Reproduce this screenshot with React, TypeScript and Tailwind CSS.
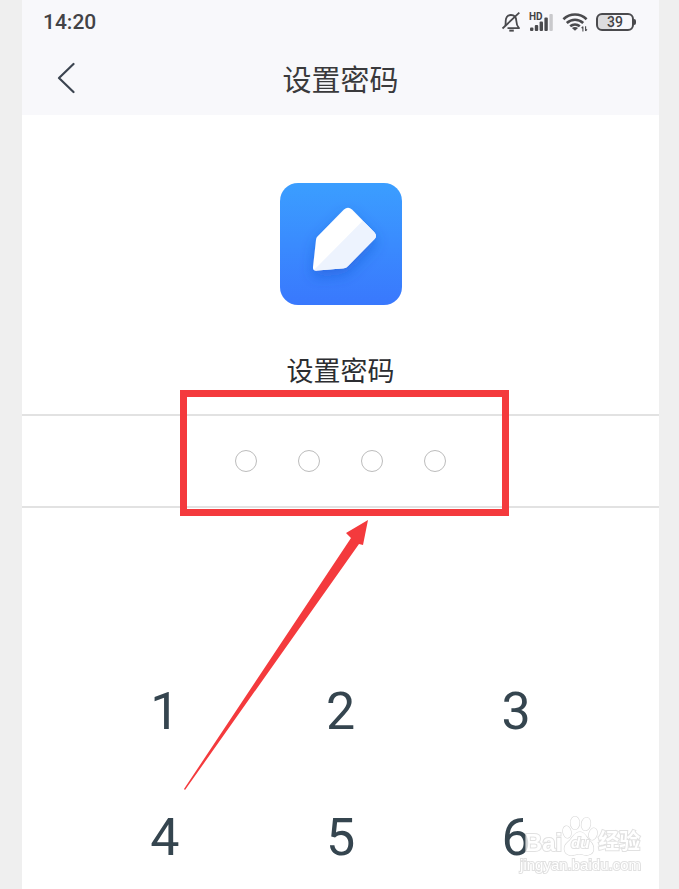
import { useState } from "react";

const KEYS = ["1", "2", "3", "4", "5", "6"];
const CODE_LENGTH = 4;

const BellOffIcon = () => (
  <svg width="20" height="22" viewBox="0 0 20 22" fill="none" stroke="#4a4a4d" strokeWidth="1.8">
    <path d="M4.2 14.8C4.8 13.6 4.6 12 4.7 9.8C4.9 5.9 6.8 4 10 4C13.2 4 15.1 5.9 15.3 9.8C15.4 12.8 15.8 14.8 18 17.2H6.5" strokeLinejoin="round" />
    <path d="M1.5 17.5L18.3 1.6" />
    <path d="M8.3 19.6H12.8" strokeWidth="2" />
  </svg>
);

const SignalIcon = () => (
  <div className="relative">
    <svg width="25" height="20" viewBox="0 0 25 20" fill="#4a4a4d">
      <rect x="1" y="15.5" width="3.4" height="3.5" rx="1" />
      <rect x="5.8" y="13" width="3.4" height="6" rx="1" />
      <rect x="10.6" y="9.5" width="3.4" height="9.5" rx="1" />
      <rect x="15.4" y="5.5" width="3.4" height="13.5" rx="1" />
      <rect x="20.4" y="2" width="3.4" height="17" rx="1" fill="#c9c9cc" />
    </svg>
    <span className="absolute left-0 top-0 text-[10px] leading-[9px] font-bold">HD</span>
  </div>
);

const WifiIcon = () => (
  <svg width="26" height="20" viewBox="0 0 26 20" fill="none" stroke="#4a4a4d" strokeWidth="2.6">
    <path d="M1.4 7.2C8 .9 18 .9 24.6 7.2" />
    <path d="M4.8 11C9.6 6.6 16.4 6.6 21.2 11" />
    <path d="M8.2 14.3C11 12 15 12 17.8 14.3" />
    <path d="M9.9 16.1C11.8 14.7 14.2 14.7 16.1 16.1L13 18.8Z" fill="#4a4a4d" stroke="none" />
    <path d="M20.9 14.6V19.4M23.6 14.2V19M20.9 14.6L19.6 16.2M23.6 19L25 17.4" strokeWidth="1.1" />
  </svg>
);

const AppLogo = () => (
  <svg width="122" height="122" viewBox="0 0 122 122" className="block">
    <defs>
      <linearGradient id="tile" x1="0" y1="0" x2="0" y2="1">
        <stop offset="0" stopColor="#3b9eff" />
        <stop offset="1" stopColor="#3978fd" />
      </linearGradient>
      <filter id="shade" x="-40%" y="-40%" width="180%" height="180%">
        <feDropShadow dx="0" dy="6" stdDeviation="7" floodColor="#1c50c8" floodOpacity="0.45" />
      </filter>
      <clipPath id="pen">
        <path d="M37 54L64 26.5Q68 22.8 72 26.5L94.5 49.5Q97.5 53 94.5 56L68 83Q66.5 84.8 64 85.2L37 87.6Q32.5 88 33 84L36 57Q36.2 55 37 54Z" />
      </clipPath>
    </defs>
    <rect width="122" height="122" rx="18" fill="url(#tile)" />
    <g filter="url(#shade)">
      <g clipPath="url(#pen)">
        <rect width="122" height="122" fill="#fff" />
        <path d="M34 87L82.5 38L110 60L70 100Z" fill="#edf3fe" />
      </g>
    </g>
  </svg>
);

const Annotation = () => (
  <svg width="329" height="402" viewBox="0 0 329 402" fill="#f43a3d">
    <rect x="3.5" y="3.5" width="322" height="119" fill="none" stroke="#f43a3d" strokeWidth="7" />
    <path d="M188 130L166 143L171 148L4 399L5 400L179 154L183 155Z" />
  </svg>
);

const Watermark = () => (
  <div
    aria-hidden="true"
    className="pointer-events-none absolute right-[18px] bottom-4 flex flex-col items-center font-['Liberation_Sans','Noto_Sans_CJK_SC',sans-serif] font-bold text-white opacity-80 [paint-order:stroke] [-webkit-text-stroke:2px_#dadada]"
  >
    <div className="flex items-end pl-1">
      <span className="text-[24px] leading-7">Bai</span>
      <div className="relative">
        <svg width="36" height="42" viewBox="0 0 36 42" fill="#fff" stroke="#d0d0d0" strokeWidth="1.2">
          <ellipse cx="5" cy="17" rx="4" ry="6" transform="rotate(-12 5 17)" />
          <ellipse cx="13" cy="8" rx="4.5" ry="6.5" />
          <ellipse cx="24" cy="9" rx="4.5" ry="6.5" transform="rotate(10 24 9)" />
          <ellipse cx="31" cy="19" rx="4" ry="6" transform="rotate(16 31 19)" />
          <path d="M18 17C23 17 24 22 28 26C33 31 33 39 26 40C22 40.5 20 39 17 39C14 39 11 41 7 40C1 38 1 31 6 27C11 23 12 17 18 17Z" />
        </svg>
        <span className="absolute inset-x-0 bottom-1 text-center text-[15px] leading-5 italic">du</span>
      </div>
      <span className="text-[21px] leading-8">经验</span>
    </div>
    <span className="text-[15px] leading-4 font-normal">jingyan.baidu.com</span>
  </div>
);

export default function App() {
  const [code, setCode] = useState("");

  const press = (key: string) => {
    setCode((prev) => (prev.length < CODE_LENGTH ? prev + key : prev));
  };

  return (
    <div className="min-h-screen bg-[#efefef] pl-[22px] pr-5 font-['Roboto','Noto_Sans_CJK_SC',sans-serif]">
      <main className="relative min-h-screen overflow-hidden bg-white">
        <header className="bg-[#f8f8fb] pb-[7px]">
          <div className="flex h-11 items-center justify-between pl-[21px] pr-[23px] text-[#434346]">
            <time className="text-[21px] leading-6 font-medium">14:20</time>
            <div className="flex items-center gap-2">
              <BellOffIcon />
              <SignalIcon />
              <WifiIcon />
              <div className="flex items-center">
                <div className="flex h-[18px] w-[38px] items-center justify-center rounded-md border-2 border-[#4a4a4d] bg-linear-to-r from-[#dcdcde] from-40% to-transparent to-40% text-[14px] leading-none font-medium">
                  39
                </div>
                <div className="h-1.5 w-0.5 rounded-r bg-[#4a4a4d]" />
              </div>
            </div>
          </div>
          <div className="grid h-16 grid-cols-[1fr_auto_1fr] items-center pb-1 pt-2">
            <button type="button" aria-label="返回" className="ml-8 flex w-6 justify-center">
              <svg width="18" height="32" viewBox="0 0 18 32" fill="none" stroke="#3c4450" strokeWidth="2.2" strokeLinecap="round" strokeLinejoin="round">
                <path d="M16.5 2L2 16L16.5 30" />
              </svg>
            </button>
            <h1 className="font-['Noto_Sans_CJK_SC',sans-serif] text-[29px] leading-10 text-[#3a3a3c]">设置密码</h1>
          </div>
        </header>

        <div className="flex flex-col items-center pt-17">
          <AppLogo />
          <h2 className="mt-[45px] mb-6 font-['Noto_Sans_CJK_SC',sans-serif] text-[27px] leading-10 text-[#2c2d31]">设置密码</h2>
        </div>

        <section className="relative">
          <div className="flex h-[94px] items-center justify-center gap-[41px] border-y-2 border-[#e2e2e2]">
            {Array.from({ length: CODE_LENGTH }, (_, i) => (
              <input
                key={i}
                type="password"
                readOnly
                aria-label={`密码第${i + 1}位`}
                value={code[i] ?? ""}
                className="size-[22px] rounded-full border border-[#bcbcbc] text-center text-xs outline-none"
              />
            ))}
          </div>
          <div className="pointer-events-none absolute inset-x-0 -top-6 flex justify-center pl-2">
            <Annotation />
          </div>
        </section>

        <div className="grid grid-cols-3 gap-y-[26px] px-[55px] pt-[154px]">
          {KEYS.map((key) => (
            <button
              key={key}
              type="button"
              onClick={() => press(key)}
              className="h-[100px] text-[52px] leading-none text-[#35454f]"
            >
              {key}
            </button>
          ))}
        </div>

        <Watermark />
      </main>
    </div>
  );
}
